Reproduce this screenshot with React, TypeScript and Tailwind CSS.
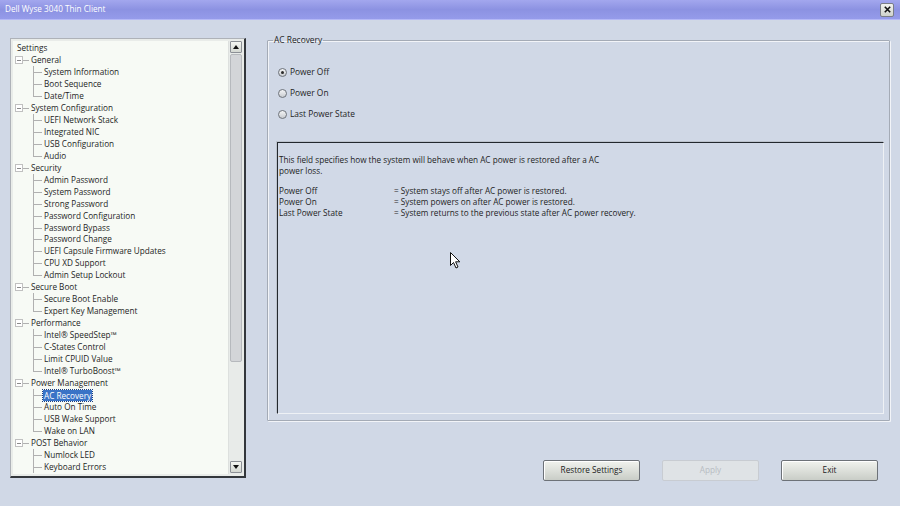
import React from "react";

type Item = { label: string; level: 0 | 1 | 2; last?: boolean; selected?: boolean };

const groups: { title: string; children: string[] }[] = [
  { title: "General", children: ["System Information", "Boot Sequence", "Date/Time"] },
  { title: "System Configuration", children: ["UEFI Network Stack", "Integrated NIC", "USB Configuration", "Audio"] },
  {
    title: "Security",
    children: [
      "Admin Password",
      "System Password",
      "Strong Password",
      "Password Configuration",
      "Password Bypass",
      "Password Change",
      "UEFI Capsule Firmware Updates",
      "CPU XD Support",
      "Admin Setup Lockout",
    ],
  },
  { title: "Secure Boot", children: ["Secure Boot Enable", "Expert Key Management"] },
  { title: "Performance", children: ["Intel® SpeedStep™", "C-States Control", "Limit CPUID Value", "Intel® TurboBoost™"] },
  { title: "Power Management", children: ["AC Recovery", "Auto On Time", "USB Wake Support", "Wake on LAN"] },
  { title: "POST Behavior", children: ["Numlock LED", "Keyboard Errors"] },
];

const items: Item[] = [{ label: "Settings", level: 0 }];
groups.forEach((g) => {
  items.push({ label: g.title, level: 1 });
  g.children.forEach((c, i) =>
    items.push({ label: c, level: 2, last: i === g.children.length - 1 && g.title !== "POST Behavior", selected: c === "AC Recovery" })
  );
});

const font = { fontFamily: '"Open Sans", "DejaVu Sans", sans-serif' };

function CatIcon() {
  return (
    <svg width="17" height="12" className="shrink-0" shapeRendering="crispEdges">
      <rect x="1.5" y="2.5" width="7" height="7" fill="#fff" stroke="#c0c0c0" />
      <line x1="3" y1="6" x2="7" y2="6" stroke="#8a8a8a" />
      <line x1="9" y1="6.5" x2="15" y2="6.5" stroke="#b0b0b0" />
    </svg>
  );
}

function ChildIcon({ last }: { last?: boolean }) {
  return (
    <svg width="12" height="12" className="shrink-0" shapeRendering="crispEdges">
      <line x1="1.5" y1="0" x2="1.5" y2={last ? 6.5 : 12} stroke="#b0b0b0" />
      <line x1="1.5" y1="6.5" x2="10" y2="6.5" stroke="#b0b0b0" />
    </svg>
  );
}

function Tree() {
  return (
    <div className="w-[236px] h-[440px] mt-[4px] border-t border-l border-t-[#aeb2b8] border-l-[#aeb2b8] border-r-2 border-b-2 border-r-[#33373c] border-b-[#33373c] bg-[#e9ece9] p-[2px] flex shrink-0">
      <div className="flex-1 bg-[#f7faf5] overflow-hidden pt-[1px] pl-[1px]">
        {items.map((it, i) => (
          <div key={i} className="h-[11.97px] flex items-center text-[8.2px] leading-[12px] text-[#1e1e1e] whitespace-nowrap">
            {it.level === 0 && <span className="ml-[3px]">{it.label}</span>}
            {it.level === 1 && (
              <>
                <CatIcon />
                <span>{it.label}</span>
              </>
            )}
            {it.level === 2 && (
              <>
                <span className="w-[18px] shrink-0" />
                <ChildIcon last={it.last} />
                {it.selected ? (
                  <span className="bg-[#3a73c6] text-white px-[1px] -ml-[1px] outline outline-1 outline-dotted outline-[#1d3f80] leading-[11px]">
                    {it.label}
                  </span>
                ) : (
                  <span>{it.label}</span>
                )}
              </>
            )}
          </div>
        ))}
      </div>
      <div className="w-[14px] bg-[#e8ebe9] flex flex-col items-center pb-[1px] border-l border-[#dde0de]">
        <ScrollBtn up />
        <div className="w-[12px] h-[308px] mt-[1px] bg-[#d3d5d8] border border-[#b6b9bd] rounded-[2px]" />
        <div className="flex-1" />
        <ScrollBtn />
      </div>
    </div>
  );
}

function ScrollBtn({ up }: { up?: boolean }) {
  return (
    <div className="w-[12px] h-[12px] bg-gradient-to-b from-[#f4f6f2] to-[#d4d8d2] border border-[#8c9096] rounded-[1px] flex items-center justify-center">
      <svg width="6" height="4">
        {up ? <polygon points="0,4 6,4 3,0" fill="#111" /> : <polygon points="0,0 6,0 3,4" fill="#111" />}
      </svg>
    </div>
  );
}

function Radio({ checked, label }: { checked?: boolean; label: string }) {
  return (
    <div className="h-[21px] flex items-center">
      <span className="w-[9px] h-[9px] rounded-full border border-[#6e737a] bg-gradient-to-b from-[#f4f5f6] to-[#c9ccd0] flex items-center justify-center">
        {checked && <span className="w-[3px] h-[3px] rounded-full bg-[#2a2a2a]" />}
      </span>
      <span className="ml-[3px] text-[8.4px] text-[#1e1e1e]">{label}</span>
    </div>
  );
}

function Button({ label, disabled }: { label: string; disabled?: boolean }) {
  return (
    <div
      className={
        "w-[97px] h-[21px] rounded-[2px] flex items-center justify-center text-[8.2px] " +
        (disabled
          ? "border border-[#c8ccd2] bg-[#dfe3e6] text-[#b7bcc2]"
          : "border border-[#6d7278] bg-gradient-to-b from-[#f1f3ee] to-[#c9cdc7] text-[#1c1c1c] shadow-[inset_1px_1px_0_#fff]")
      }
    >
      {label}
    </div>
  );
}

function Cursor() {
  return (
    <svg width="12" height="18" viewBox="0 0 12 18" className="absolute left-[450px] top-[252px]">
      <path d="M0.5 0.5 L0.5 13.5 L3.5 10.5 L6 16 L8 15 L5.6 9.8 L9.8 9.8 Z" fill="#fff" stroke="#111" strokeWidth="1" strokeLinejoin="round" />
    </svg>
  );
}

export default function App() {
  return (
    <div className="w-[900px] h-[506px] bg-[#d0d8e6] flex flex-col overflow-hidden relative" style={font}>
      <div className="h-[20px] shrink-0 bg-gradient-to-b from-[#a3a7ee] via-[#8c92e2] to-[#959bea] border-b border-[#b4b8f6] flex items-center justify-between pl-[5px] pr-[6px]">
        <span className="text-white text-[8.2px]">Dell Wyse 3040 Thin Client</span>
        <div className="w-[14px] h-[14px] bg-gradient-to-b from-[#f2f3f0] to-[#cfd2cc] border border-[#7a7e86] rounded-[2px] flex items-center justify-center">
          <svg width="7" height="7" viewBox="0 0 7 7">
            <path d="M0.8 0.8 L6.2 6.2 M6.2 0.8 L0.8 6.2" stroke="#111" strokeWidth="1.6" />
          </svg>
        </div>
      </div>
      <div className="flex flex-1 pt-[14px] pl-[10px]">
        <Tree />
        <div className="ml-[21px] w-[623px] flex flex-col">
          <fieldset className="h-[387px] border border-[#a4abb6] shadow-[inset_1px_1px_0_#f2f4f8,1px_1px_0_#f2f4f8] rounded-[1px] px-[5px]">
            <legend className="px-[1px] text-[8.4px] text-[#1e1e1e] leading-[12px]">AC Recovery</legend>
            <div className="mt-[16px] pl-[5px] flex flex-col">
              <Radio checked label="Power Off" />
              <Radio label="Power On" />
              <Radio label="Last Power State" />
            </div>
            <div className="mt-[17px] ml-[4px] h-[272px] border-t border-l border-t-[#23282e] border-l-[#23282e] border-b border-r border-b-[#eef1f5] border-r-[#eef1f5] shadow-[-1px_-1px_0_#bcc3cd] bg-[#d1d9e7] pt-[11px] pl-[1px] text-[8.2px] leading-[11px] text-[#1e1e1e]">
              <div>This field specifies how the system will behave when AC power is restored after a AC</div>
              <div>power loss.</div>
              <div className="h-[9px]" />
              {[
                ["Power Off", "= System stays off after AC power is restored."],
                ["Power On", "= System powers on after AC power is restored."],
                ["Last Power State", "= System returns to the previous state after AC power recovery."],
              ].map(([a, b]) => (
                <div key={a} className="flex">
                  <span className="w-[115px] shrink-0">{a}</span>
                  <span>{b}</span>
                </div>
              ))}
            </div>
          </fieldset>
          <div className="mt-[39px] flex justify-end gap-[22px] pr-[12px]">
            <Button label="Restore Settings" />
            <Button label="Apply" disabled />
            <Button label="Exit" />
          </div>
        </div>
      </div>
      <Cursor />
    </div>
  );
}
